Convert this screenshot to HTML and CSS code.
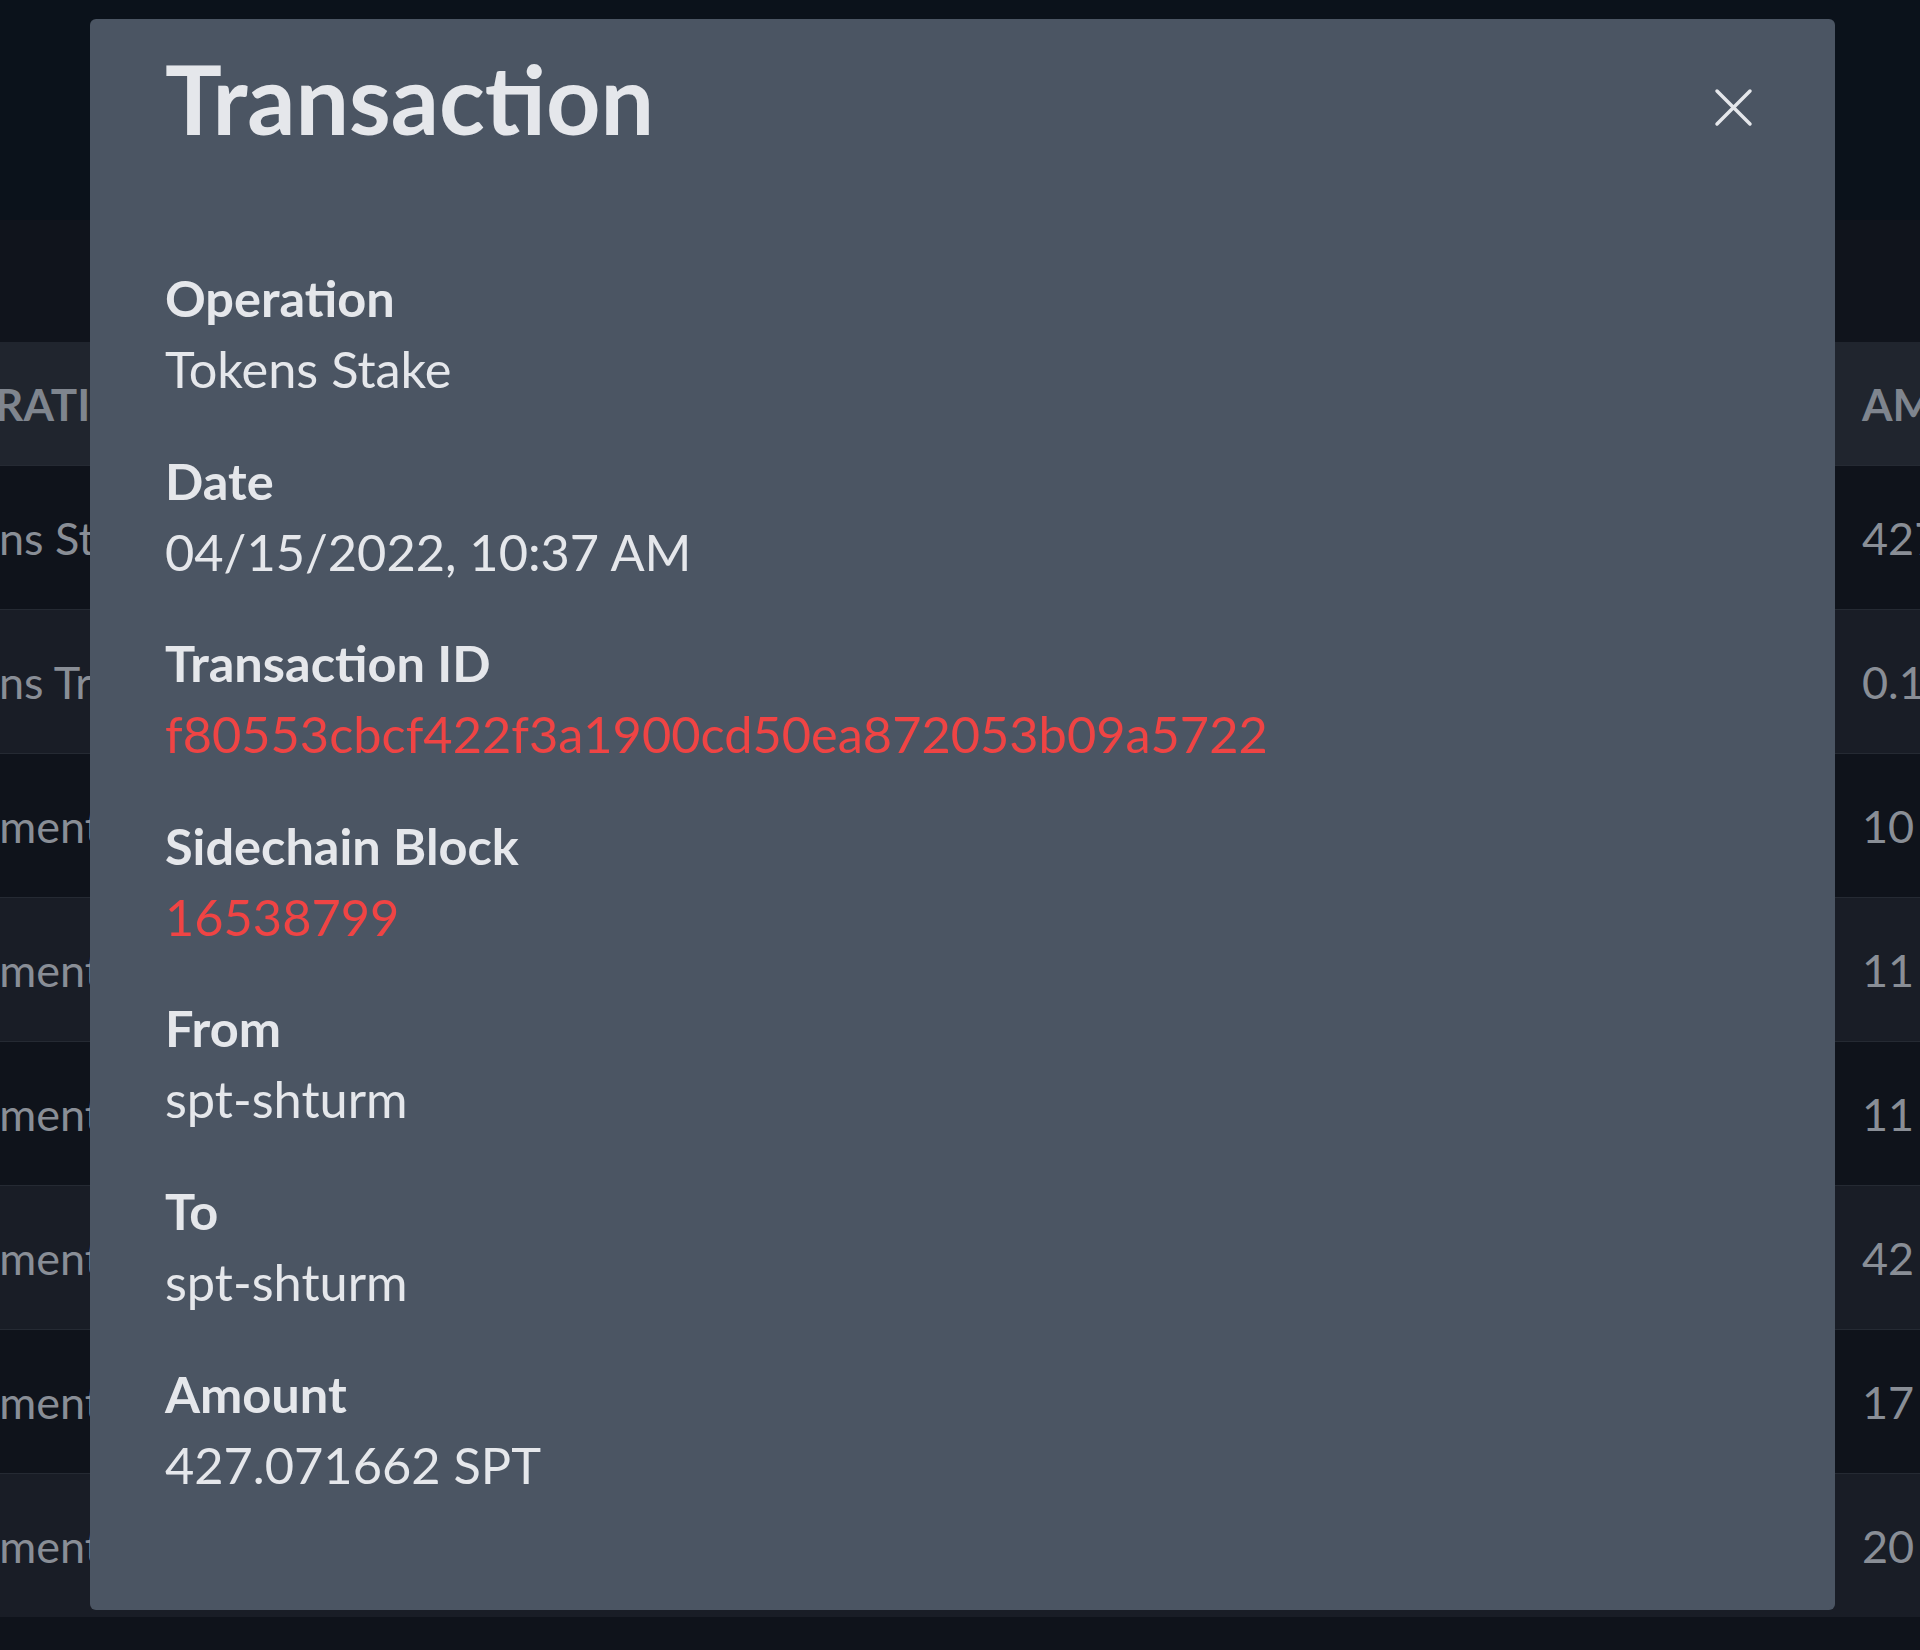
FILE: index.html
```html
<!DOCTYPE html>
<html lang="en">
<head>
    <meta charset="UTF-8">
    <title>Transaction</title>
    <link rel="stylesheet" href="styles.css">
</head>
<body>
    <div class="page">
        <header class="topbar"></header>
        <div class="toolbar"></div>

        <div class="table-wrap">
            <table class="tx-table">
                <colgroup>
                    <col class="col-op">
                    <col class="col-date">
                    <col class="col-party">
                    <col class="col-amount">
                </colgroup>
                <thead>
                    <tr>
                        <th>Operation</th>
                        <th>Date</th>
                        <th>From / To</th>
                        <th>Amount</th>
                    </tr>
                </thead>
                <tbody>
                    <tr><td>Tokens Stake</td><td>04/15/2022</td><td>spt-shturm</td><td>427.071662</td></tr>
                    <tr><td>Tokens Transfer</td><td>04/15/2022</td><td>spt-shturm</td><td>0.1</td></tr>
                    <tr><td>Comment</td><td>04/14/2022</td><td>spt-shturm</td><td>10</td></tr>
                    <tr><td>Comment</td><td>04/13/2022</td><td>spt-shturm</td><td>11</td></tr>
                    <tr><td>Comment</td><td>04/12/2022</td><td>spt-shturm</td><td>11</td></tr>
                    <tr><td>Comment</td><td>04/11/2022</td><td>spt-shturm</td><td>42</td></tr>
                    <tr><td>Comment</td><td>04/10/2022</td><td>spt-shturm</td><td>17</td></tr>
                    <tr><td>Comment</td><td>04/09/2022</td><td>spt-shturm</td><td>20</td></tr>
                </tbody>
            </table>
        </div>
    </div>

    <div class="backdrop">
        <div class="modal">
            <div class="modal-head">
                <h2 class="modal-title">Transaction</h2>
                <button class="close" aria-label="Close">
                    <svg width="39" height="39" viewBox="0 0 39 39">
                        <path d="M3 3 L36 36 M36 3 L3 36" stroke="#e5e7eb" stroke-width="3.5" stroke-linecap="round"/>
                    </svg>
                </button>
            </div>

            <dl class="details">
                <div class="item">
                    <dt>Operation</dt>
                    <dd>Tokens Stake</dd>
                </div>
                <div class="item">
                    <dt>Date</dt>
                    <dd>04/15/2022, 10:37 AM</dd>
                </div>
                <div class="item">
                    <dt>Transaction ID</dt>
                    <dd><a href="#" class="link">f80553cbcf422f3a1900cd50ea872053b09a5722</a></dd>
                </div>
                <div class="item">
                    <dt>Sidechain Block</dt>
                    <dd><a href="#" class="link">16538799</a></dd>
                </div>
                <div class="item">
                    <dt>From</dt>
                    <dd>spt-shturm</dd>
                </div>
                <div class="item">
                    <dt>To</dt>
                    <dd>spt-shturm</dd>
                </div>
                <div class="item">
                    <dt>Amount</dt>
                    <dd>427.071662 SPT</dd>
                </div>
            </dl>
        </div>
    </div>
</body>
</html>
```

FILE: styles.css
```css
html, body {
    margin: 0;
    height: 100%;
}

body {
    font-family: Lato, "Open Sans", sans-serif;
    background-color: #0f131b;
    overflow: hidden;
}

.topbar {
    height: 220px;
    background-color: #0b121b;
}

.toolbar {
    height: 122px;
    background-color: #10141c;
}

.table-wrap {
    overflow: hidden;
}

.tx-table {
    margin-left: -125px;
    border-collapse: collapse;
    table-layout: fixed;
    width: 2300px;
}

.col-op { width: 500px; }
.col-date { width: 500px; }
.col-party { width: 955px; }
.col-amount { width: 345px; }

.tx-table th,
.tx-table td {
    padding: 0 32px;
    text-align: left;
    white-space: nowrap;
    overflow: hidden;
}

.tx-table th {
    height: 123px;
    background-color: #20252e;
    color: #7f858e;
    font-size: 44px;
    font-weight: 700;
    text-transform: uppercase;
}

.tx-table td {
    height: 143px;
    color: #898e96;
    font-size: 45px;
    border-top: 1px solid #252a33;
}

.tx-table tbody tr:nth-child(odd) td {
    background-color: #0f131b;
}

.tx-table tbody tr:nth-child(even) td {
    background-color: #191d26;
}

.backdrop {
    position: fixed;
    inset: 0;
    display: flex;
    justify-content: center;
    align-items: flex-start;
    padding: 19px 0 0 5px;
}

.modal {
    width: 1745px;
    height: 1591px;
    box-sizing: border-box;
    background-color: #4b5563;
    border-radius: 6px;
    padding: 26px 82px 0 75px;
    color: #e5e7eb;
}

.modal-head {
    display: flex;
    justify-content: space-between;
    align-items: center;
}

.modal-title {
    margin: 0;
    font-size: 95px;
    font-weight: 700;
    line-height: 106px;
}

.close {
    background: none;
    border: none;
    padding: 0;
    margin-top: 18px;
    cursor: pointer;
    display: flex;
}

.details {
    margin: 111px 0 0;
    display: flex;
    flex-direction: column;
    gap: 40.6px;
}

.details dt,
.details dd {
    margin: 0;
    font-size: 50.5px;
    line-height: 71px;
}

.details dt {
    font-weight: 700;
}

.link {
    color: #ef4444;
    text-decoration: none;
}
```
